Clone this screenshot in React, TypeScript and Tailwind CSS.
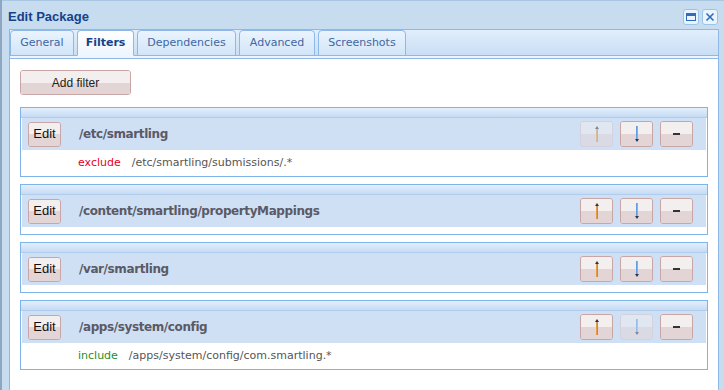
import React from "react";

type Filter = {
  path: string;
  rule?: { mode: "include" | "exclude"; pattern: string };
  canUp: boolean;
  canDown: boolean;
};

const filters: Filter[] = [
  {
    path: "/etc/smartling",
    rule: { mode: "exclude", pattern: "/etc/smartling/submissions/.*" },
    canUp: false,
    canDown: true,
  },
  { path: "/content/smartling/propertyMappings", canUp: true, canDown: true },
  { path: "/var/smartling", canUp: true, canDown: true },
  {
    path: "/apps/system/config",
    rule: { mode: "include", pattern: "/apps/system/config/com.smartling.*" },
    canUp: true,
    canDown: false,
  },
];

const tabs = [
  { label: "General", w: "w-[64px]" },
  { label: "Filters", w: "w-[57px]" },
  { label: "Dependencies", w: "w-[99px]" },
  { label: "Advanced", w: "w-[76px]" },
  { label: "Screenshots", w: "w-[88px]" },
];

const font = { fontFamily: '"DejaVu Sans", Verdana, sans-serif' };
const arial = { fontFamily: '"Liberation Sans", Arial, sans-serif' };

const Arrow = ({ dir }: { dir: "up" | "down" }) => (
  <svg width="8" height="18" viewBox="0 0 8 18">
    {dir === "up" ? (
      <>
        <rect x="3" y="3" width="1" height="14" fill="#e59b45" />
        <rect x="4" y="3" width="1" height="14" fill="#5f9ee0" />
        <path d="M2 4 L4 1 L6 4 Z" fill="#2a3550" />
      </>
    ) : (
      <>
        <rect x="3" y="1" width="1" height="14" fill="#5f9ee0" />
        <rect x="4" y="1" width="1" height="14" fill="#7ab4ee" />
        <path d="M2 14 L4 17 L6 14 Z" fill="#2a3550" />
      </>
    )}
  </svg>
);

const PinkButton = ({
  children,
  disabled,
  className = "",
}: {
  children: React.ReactNode;
  disabled?: boolean;
  className?: string;
}) => (
  <div
    className={`flex flex-col rounded-[3px] border overflow-hidden ${
      disabled ? "border-[#d6c4c8] opacity-50" : "border-[#c8a6a6]"
    } ${className}`}
  >
    <div className="relative flex-1 flex flex-col">
      <div className="flex-1 bg-[#f3efef]" />
      <div className="flex-1 bg-[#e3d5d5]" />
      <div className="absolute inset-0 flex items-center justify-center">{children}</div>
    </div>
  </div>
);

export default function App() {
  return (
    <div
      className="w-[724px] h-[390px] overflow-hidden bg-[#c7dcee] border-l-2 border-l-[#8ea6bf] flex flex-col"
      style={font}
    >
      {/* title bar */}
      <div className="h-[29px] flex items-center justify-between pl-[6px] pr-[6px] pt-[3px] border-t border-[#a9c6e2]">
        <span className="text-[13px] font-bold text-[#15428b]" style={arial}>
          Edit Package
        </span>
        <div className="flex gap-[3px] mt-[1px]">
          <div className="w-[16px] h-[16px] rounded-[3px] border border-[#9cc4ea] bg-[#eaf4fd] flex items-center justify-center">
            <div className="w-[10px] h-[8px] border border-[#2f6cc0] border-t-[3px]" />
          </div>
          <div className="w-[16px] h-[16px] rounded-[3px] border border-[#9cc4ea] bg-[#eaf4fd] flex items-center justify-center">
            <svg width="10" height="10" viewBox="0 0 10 10">
              <path d="M1.5 1.5 L8.5 8.5 M8.5 1.5 L1.5 8.5" stroke="#2f6cc0" strokeWidth="1.6" />
            </svg>
          </div>
        </div>
      </div>

      <div className="flex-1 flex flex-col ml-[7px] mr-[5px] border-l border-r border-[#8db8e8] min-h-0">
        {/* tab strip */}
        <div className="h-[27px] bg-gradient-to-b from-[#e1eefc] to-[#c9def5] border-t border-[#8db8e8] border-b flex items-end gap-[3px]">
          {tabs.map((t) => {
            const active = t.label === "Filters";
            return (
              <div
                key={t.label}
                className={`${t.w} h-[26px] -mb-px flex items-center justify-center rounded-t-[4px] border border-[#8db8e8] text-[11px] ${
                  active
                    ? "bg-gradient-to-b from-[#ffffff] to-[#eef5fd] font-bold border-b-[#eef5fd] text-[#15428b]"
                    : "bg-gradient-to-b from-[#eaf4fe] to-[#d2e5f8] text-[#3e67a3]"
                }`}
              >
                {t.label}
              </div>
            );
          })}
        </div>
        <div className="h-[2px] bg-[#eef5fd] border-b border-[#8db8e8] box-content" />

        {/* content */}
        <div className="flex-1 bg-white px-[10px] pt-[11px] flex flex-col gap-[7px] min-h-0">
          <PinkButton className="w-[111px] h-[25px] mb-[5px]">
            <span className="text-[12px] text-[#222]" style={arial}>
              Add filter
            </span>
          </PinkButton>

          {filters.map((f) => (
            <div key={f.path} className="border border-[#7db4ea] flex flex-col shrink-0">
              <div className="h-[10px] bg-gradient-to-b from-[#e4effc] to-[#c5dbf4] border-b border-[#b0cdee]" />
              <div className="mx-[1px] h-[32px] bg-[#cfe0f4] flex items-center pl-[6px] pr-[13px]">
                <PinkButton className="w-[33px] h-[25px]">
                  <span className="text-[13px] text-[#111]" style={arial}>
                    Edit
                  </span>
                </PinkButton>
                <span className="ml-[18px] text-[12px] font-bold text-[#5a5a66] tracking-[-0.4px] flex-1">
                  {f.path}
                </span>
                <div className="flex gap-[7px]">
                  <PinkButton className="w-[33px] h-[26px]" disabled={!f.canUp}>
                    <Arrow dir="up" />
                  </PinkButton>
                  <PinkButton className="w-[33px] h-[26px]" disabled={!f.canDown}>
                    <Arrow dir="down" />
                  </PinkButton>
                  <PinkButton className="w-[33px] h-[26px]">
                    <div className="w-[7px] h-[2px] bg-[#333]" />
                  </PinkButton>
                </div>
              </div>
              {f.rule ? (
                <div className="h-[26px] flex items-center pl-[57px] text-[11px]">
                  <span className={f.rule.mode === "exclude" ? "text-[#e8001a]" : "text-[#1f8f1f]"}>
                    {f.rule.mode}
                  </span>
                  <span className="ml-[11px] text-[#555]">{f.rule.pattern}</span>
                </div>
              ) : (
                <div className="h-[7px]" />
              )}
            </div>
          ))}
        </div>
      </div>
    </div>
  );
}
